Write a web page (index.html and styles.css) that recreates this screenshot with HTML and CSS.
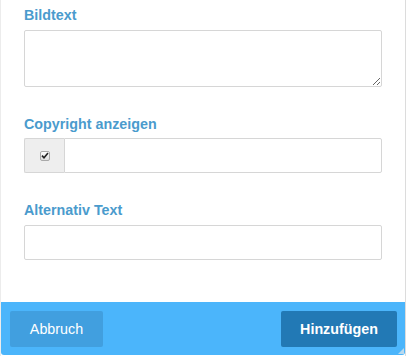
FILE: index.html
```html
<!DOCTYPE html>
<html lang="de">
<head>
  <meta charset="UTF-8" />
  <meta name="viewport" content="width=device-width, initial-scale=1.0" />
  <title>Bild einfügen</title>
  <link rel="stylesheet" href="styles.css">
</head>
<body>
  <div class="dialog">
    <div class="dialog-body">
      <div class="form-group">
        <label for="caption">Bildtext</label>
        <textarea id="caption"></textarea>
      </div>

      <div class="form-group">
        <label>Copyright anzeigen</label>
        <div class="input-group">
          <span class="addon">
            <span class="check">
              <svg width="8" height="7" viewBox="0 0 8 7"><path d="M1 3.6 L3 5.8 L7 1" fill="none" stroke="#222" stroke-width="1.6"/></svg>
            </span>
          </span>
          <input type="text" class="field" />
        </div>
      </div>

      <div class="form-group">
        <label for="alt">Alternativ Text</label>
        <input type="text" id="alt" class="field" />
      </div>
    </div>

    <div class="dialog-footer">
      <button class="btn btn-cancel">Abbruch</button>
      <button class="btn btn-primary">Hinzufügen</button>
      <span class="grip"></span>
    </div>
  </div>
</body>
</html>
```

FILE: styles.css
```css
html, body {
  margin: 0;
  background: #fff;
}
body {
  font-family: "Liberation Sans", Arial, sans-serif;
}
.dialog {
  width: 406px;
  height: 356px;
  box-sizing: border-box;
  border-left: 1px solid #ececec;
  border-right: 1px solid #dcdcdc;
  display: flex;
  flex-direction: column;
  background: #fff;
}
.dialog-body {
  flex: 1;
  padding: 5px 23px 0 23px;
}
.form-group {
  margin-bottom: 27px;
}
label {
  display: block;
  font-size: 14.3px;
  line-height: 20px;
  font-weight: bold;
  color: #4a9bcd;
  margin-bottom: 5px;
}
textarea {
  display: block;
  width: 100%;
  height: 57px;
  box-sizing: border-box;
  border: 1px solid #d6d6d6;
  border-radius: 2px;
  margin: 0;
  font-family: inherit;
}
.field {
  display: block;
  width: 100%;
  height: 35px;
  box-sizing: border-box;
  border: 1px solid #d6d6d6;
  border-radius: 2px;
  margin: 0;
  padding: 0 8px;
  font-family: inherit;
}
.input-group {
  display: flex;
  margin-top: -1px;
}
.input-group .field {
  flex: 1;
  border-radius: 0 2px 2px 0;
}
.addon {
  width: 40px;
  height: 35px;
  box-sizing: border-box;
  background: #eeeeee;
  border: 1px solid #d6d6d6;
  border-right: none;
  border-radius: 2px 0 0 2px;
  display: flex;
  align-items: center;
  justify-content: center;
}
.check {
  width: 10px;
  height: 10px;
  box-sizing: border-box;
  border: 1px solid #a9a9a9;
  border-radius: 2px;
  background: linear-gradient(#fdfdfd, #dedede);
  display: flex;
  align-items: center;
  justify-content: center;
}
.dialog-footer {
  position: relative;
  height: 53px;
  background: #4bb5fb;
  border-radius: 0 0 3px 3px;
  margin-bottom: 1px;
  padding: 9px 8px 0 9px;
  box-sizing: border-box;
  display: flex;
  justify-content: space-between;
  align-items: flex-start;
}
.btn {
  height: 36px;
  border: none;
  border-radius: 2px;
  color: #fff;
  font-family: inherit;
  font-size: 14.3px;
  padding: 0;
}
.btn-cancel {
  width: 93px;
  background: #419fdf;
}
.btn-primary {
  width: 116px;
  background: #2279b5;
  font-weight: bold;
}
.grip {
  position: absolute;
  right: 1px;
  bottom: 1px;
  width: 0;
  height: 0;
  border-left: 6px solid transparent;
  border-bottom: 6px solid #b9d9ee;
}
```
